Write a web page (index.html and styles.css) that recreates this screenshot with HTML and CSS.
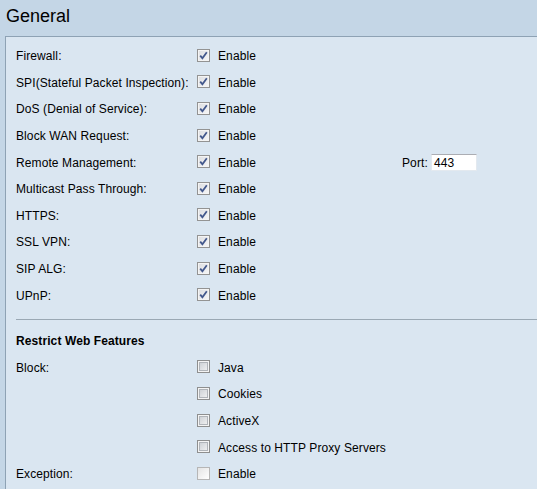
FILE: index.html
```html
<!DOCTYPE html>
<html>
<head>
<meta charset="utf-8">
<link rel="stylesheet" href="styles.css">
</head>
<body>
<h1 class="title">General</h1>
<div class="panel">
  <div class="row"><span class="lbl">Firewall:</span><span class="cb on"><svg viewBox="0 0 9 9"><path d="M1.2 4.6 L3.4 7.2 L7.8 1.2" /></svg></span><span class="opt">Enable</span></div>
  <div class="row"><span class="lbl">SPI(Stateful Packet Inspection):</span><span class="cb on"><svg viewBox="0 0 9 9"><path d="M1.2 4.6 L3.4 7.2 L7.8 1.2" /></svg></span><span class="opt">Enable</span></div>
  <div class="row"><span class="lbl">DoS (Denial of Service):</span><span class="cb on"><svg viewBox="0 0 9 9"><path d="M1.2 4.6 L3.4 7.2 L7.8 1.2" /></svg></span><span class="opt">Enable</span></div>
  <div class="row"><span class="lbl">Block WAN Request:</span><span class="cb on"><svg viewBox="0 0 9 9"><path d="M1.2 4.6 L3.4 7.2 L7.8 1.2" /></svg></span><span class="opt">Enable</span></div>
  <div class="row"><span class="lbl">Remote Management:</span><span class="cb on"><svg viewBox="0 0 9 9"><path d="M1.2 4.6 L3.4 7.2 L7.8 1.2" /></svg></span><span class="opt">Enable</span><span class="port">Port:</span><span class="field">443</span></div>
  <div class="row"><span class="lbl">Multicast Pass Through:</span><span class="cb on"><svg viewBox="0 0 9 9"><path d="M1.2 4.6 L3.4 7.2 L7.8 1.2" /></svg></span><span class="opt">Enable</span></div>
  <div class="row"><span class="lbl">HTTPS:</span><span class="cb on"><svg viewBox="0 0 9 9"><path d="M1.2 4.6 L3.4 7.2 L7.8 1.2" /></svg></span><span class="opt">Enable</span></div>
  <div class="row"><span class="lbl">SSL VPN:</span><span class="cb on"><svg viewBox="0 0 9 9"><path d="M1.2 4.6 L3.4 7.2 L7.8 1.2" /></svg></span><span class="opt">Enable</span></div>
  <div class="row"><span class="lbl">SIP ALG:</span><span class="cb on"><svg viewBox="0 0 9 9"><path d="M1.2 4.6 L3.4 7.2 L7.8 1.2" /></svg></span><span class="opt">Enable</span></div>
  <div class="row"><span class="lbl">UPnP:</span><span class="cb on"><svg viewBox="0 0 9 9"><path d="M1.2 4.6 L3.4 7.2 L7.8 1.2" /></svg></span><span class="opt">Enable</span></div>
  <div class="sep"></div>
  <div class="row"><span class="head">Restrict Web Features</span></div>
  <div class="row"><span class="lbl">Block:</span><span class="cb off"></span><span class="opt">Java</span></div>
  <div class="row"><span class="lbl"></span><span class="cb off"></span><span class="opt">Cookies</span></div>
  <div class="row"><span class="lbl"></span><span class="cb off"></span><span class="opt">ActiveX</span></div>
  <div class="row"><span class="lbl"></span><span class="cb off"></span><span class="opt">Access to HTTP Proxy Servers</span></div>
  <div class="row"><span class="lbl">Exception:</span><span class="cb dis"></span><span class="opt">Enable</span></div>
</div>
</body>
</html>
```

FILE: styles.css
```css
html, body {
  margin: 0;
  padding: 0;
}
body {
  background: #c4d6e6;
  font-family: "Liberation Sans", Arial, sans-serif;
  font-size: 12px;
  letter-spacing: 0.1px;
  color: #000;
  height: 489px;
  overflow: hidden;
}
.title {
  margin: 0;
  padding: 6px 0 0 6px;
  height: 30px;
  font-size: 18px;
  font-weight: normal;
  line-height: 20px;
  letter-spacing: 0;
}
.panel {
  margin-left: 5px;
  height: 453px;
  background: #dae6f1;
  border: 1px solid #8ea2b4;
  border-right: none;
  border-bottom: none;
  padding: 6px 0 0 10px;
  box-sizing: border-box;
}
.row {
  display: flex;
  align-items: center;
  height: 26.6px;
}
.lbl {
  width: 181px;
  flex: none;
  white-space: nowrap;
}
.cb {
  flex: none;
  width: 13px;
  height: 13px;
  box-sizing: border-box;
  position: relative;
  top: -1px;
}
.cb.on {
  border: 1px solid #939393;
  background: linear-gradient(135deg, #dcdde0, #f7f7f8);
  box-shadow: inset 0 0 0 1px #f4f4f4;
}
.cb.on svg {
  display: block;
  width: 9px;
  height: 9px;
  margin: 1px 0 0 1px;
}
.cb.on path {
  fill: none;
  stroke: #43588c;
  stroke-width: 1.8;
}
.cb.off {
  border: 1px solid #8e8f8f;
  background: linear-gradient(135deg, #c6cacf, #f7f7f7);
  box-shadow: inset 0 0 0 1px #f4f4f4, inset 0 0 0 2px #b0b4b9;
}
.cb.dis {
  border: 1px solid #b6b6b6;
  background: linear-gradient(135deg, #e4e4e4, #ffffff);
}
.opt {
  margin-left: 8px;
  width: 184px;
  flex: none;
  white-space: nowrap;
}
.port {
  width: 29px;
  flex: none;
}
.field {
  width: 46px;
  height: 17px;
  box-sizing: border-box;
  background: #fff;
  border: 1px solid #e3e9ef;
  border-top-color: #abadb3;
  padding: 1px 0 0 2px;
  line-height: 14px;
  font-size: 12px;
}
.sep {
  height: 1px;
  background: #9aa8b4;
  margin: 10px 0 8px 0;
}
.head {
  font-weight: bold;
}
```
